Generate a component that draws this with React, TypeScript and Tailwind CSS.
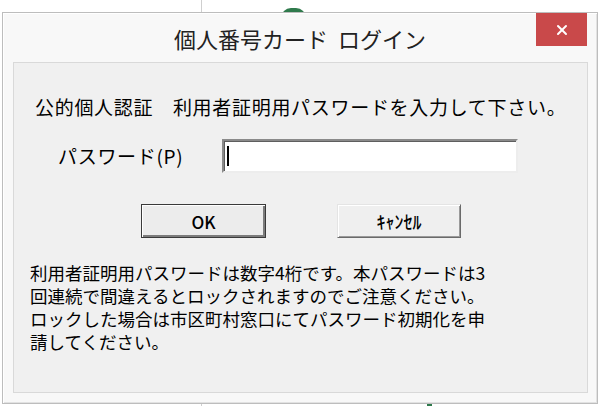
import { X } from "lucide-react";

const JP = "font-['Noto_Sans_CJK_JP','Noto_Sans',sans-serif]";

function Backdrop() {
  return (
    <>
      <div className="absolute top-0 left-[201px] h-[12px] w-px bg-[#cfcfcf]" />
      <div className="absolute top-[8px] left-[281px] h-[10px] w-[25px] rounded-t-full bg-[#2f7a4c]" />
      <div className="absolute top-[403px] left-[201px] h-[3px] w-px bg-[#cfcfcf]" />
      <div className="absolute top-[401px] left-[427px] h-[5px] w-[5px] bg-[#2f7a4c]" />
    </>
  );
}

const NOTICE = [
  "利用者証明用パスワードは数字4桁です。本パスワードは3",
  "回連続で間違えるとロックされますのでご注意ください。",
  "ロックした場合は市区町村窓口にてパスワード初期化を申",
  "請してください。",
];

export default function App() {
  return (
    <div className={`relative h-[406px] w-[600px] overflow-hidden bg-white pt-[12px] pl-[2px] ${JP}`}>
      <Backdrop />
      <div className="relative flex h-[392px] w-[596px] flex-col border border-[#bdbdbd] bg-[#f8f8f8] shadow-[inset_1px_1px_0_#ffffff,inset_-1px_-1px_0_#e2e2e2]">
        <div className="relative flex h-[49px] shrink-0 items-center justify-center">
          <span className="text-[22px] leading-none text-[#222]">
            個人番号カード<span className="inline-block w-[10px]" />ログイン
          </span>
          <button
            type="button"
            aria-label="閉じる"
            className="absolute top-0 right-[10px] flex h-[33px] w-[51px] items-center justify-center bg-[#c9494a]"
          >
            <X size={16} strokeWidth={3} color="#ffffff" />
          </button>
        </div>

        <div className="mr-[9px] mb-[10px] ml-[10px] flex flex-1 flex-col border border-[#d9d9d9] bg-[#f0f0f0] pt-[32px] text-black">
          <p className="ml-[21px] text-[19px] leading-[24px] tracking-[0.7px]">
            公的個人認証　利用者証明用パスワードを入力して下さい。
          </p>

          <div className="mt-[20px] flex h-[34px] items-center">
            <label className="ml-[44px] w-[164px] text-[19px] leading-[24px] tracking-[0.7px]">
              パスワード(P)
            </label>
            <div className="flex h-[34px] w-[296px] items-center border-2 border-t-[#8a8a8a] border-r-[#ededed] border-b-[#ededed] border-l-[#8a8a8a] bg-white pl-[3px] shadow-[inset_1px_1px_0_#5e5e5e]">
              <span className="h-[20px] w-[2px] bg-black" />
            </div>
          </div>

          <div className="mt-[31px] flex">
            <button
              type="button"
              className="ml-[127px] flex h-[34px] w-[125px] items-center justify-center border border-[#3a3a3a] bg-[#ececec] text-[17px] leading-none font-medium shadow-[inset_1px_1px_0_#ffffff,inset_-2px_-2px_0_#7c7c7c]"
            >
              OK
            </button>
            <button
              type="button"
              className="ml-[71px] flex h-[34px] w-[124px] items-center justify-center border border-t-[#e4e4e4] border-r-[#6a6a6a] border-b-[#6a6a6a] border-l-[#e4e4e4] bg-[#efefef] text-[18px] leading-none font-medium shadow-[inset_1px_1px_0_#ffffff,inset_-1px_-1px_0_#9a9a9a]"
            >
              ｷｬﾝｾﾙ
            </button>
          </div>

          <div className="mt-[23px] ml-[16px] flex flex-col text-[17.5px] leading-[23px]">
            {NOTICE.map((line) => (
              <p key={line}>{line}</p>
            ))}
          </div>
        </div>
      </div>
    </div>
  );
}
